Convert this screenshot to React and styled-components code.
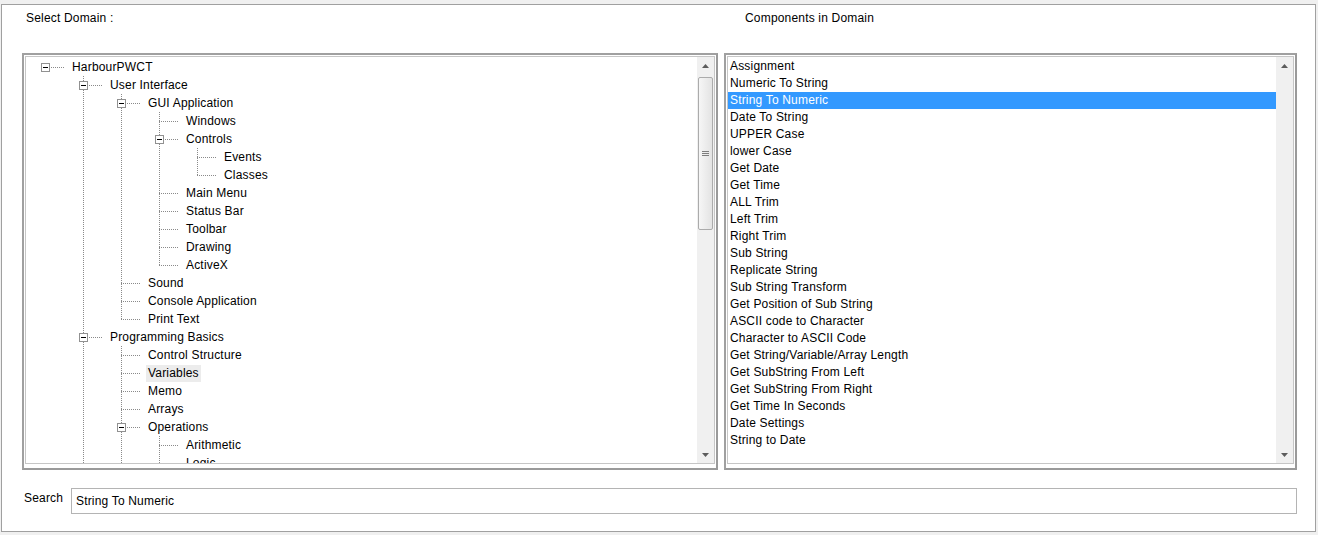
import React from "react";
import styled, { createGlobalStyle } from "styled-components";

const GlobalStyle = createGlobalStyle`
  html, body {
    margin: 0;
    padding: 0;
    background: #f0f0f0;
  }
  body {
    font-family: "Liberation Sans", Arial, sans-serif;
    font-size: 12px;
    letter-spacing: 0.18px;
    color: #000;
  }
`;

const Window = styled.div`
  box-sizing: border-box;
  margin: 4px 0 0 1px;
  width: 1315px;
  height: 528px;
  border: 1px solid #a0a0a0;
  background: #ffffff;
  padding-left: 20px;
`;

const Columns = styled.div`
  display: grid;
  grid-template-columns: 696px 573px;
  column-gap: 6px;
`;

const Header = styled(Columns)`
  box-sizing: border-box;
  height: 48px;
  padding-top: 6px;
`;

const Caption = styled.div`
  line-height: 14px;
  padding-left: ${(props) => props.$indent}px;
`;

const Frame = styled.div`
  box-sizing: border-box;
  height: 417px;
  display: flex;
  border: 2px solid;
  border-color: #a0a0a0 #9a9a9a #9a9a9a #a0a0a0;
  padding: 1px 1px 4px 1px;
`;

const ListBox = styled.div`
  flex: 1;
  min-width: 0;
  display: flex;
  border: 1px solid #c6c6c6;
  background: #ffffff;
  overflow: hidden;
`;

const TreeArea = styled.div`
  flex: 1;
  min-width: 0;
  overflow: hidden;
  padding-top: 1px;
`;

const TreeRow = styled.div`
  display: flex;
  height: 18px;
`;

const Cell = styled.div`
  position: relative;
  flex: none;
  width: 38px;

  &::before {
    content: "";
    display: ${(props) => (props.$up || props.$down ? "block" : "none")};
    position: absolute;
    left: 19px;
    width: 1px;
    top: ${(props) => (props.$up ? 0 : 9)}px;
    bottom: ${(props) => (props.$down ? 0 : 8)}px;
    background-image: linear-gradient(to bottom, #8a8a8a 50%, transparent 50%);
    background-size: 1px 2px;
  }

  &::after {
    content: "";
    display: ${(props) => (props.$h ? "block" : "none")};
    position: absolute;
    left: 19px;
    right: 0;
    top: 9px;
    height: 1px;
    background-image: linear-gradient(to right, #8a8a8a 50%, transparent 50%);
    background-size: 2px 1px;
  }
`;

const ExpandBox = styled.div`
  position: absolute;
  z-index: 1;
  left: 15px;
  top: 5px;
  width: 9px;
  height: 9px;
  box-sizing: border-box;
  border: 1px solid #919191;
  background: #ffffff;

  &::after {
    content: "";
    position: absolute;
    left: 1px;
    top: 3px;
    width: 5px;
    height: 1px;
    background: #000000;
  }
`;

const NodeLabel = styled.div`
  margin: 1px 0 0 6px;
  padding: 0 2px;
  height: 17px;
  line-height: 17px;
  white-space: nowrap;
  background: ${(props) => (props.$selected ? "#ececec" : "transparent")};
`;

const ScrollBar = styled.div`
  flex: none;
  width: 17px;
  display: flex;
  flex-direction: column;
  background: #f0f0f0;
`;

const ArrowButton = styled.div`
  flex: none;
  height: 17px;
  display: flex;
  align-items: center;
  justify-content: center;
`;

const Track = styled.div`
  flex: 1;
  padding: 3px 1px 0 1px;
`;

const Thumb = styled.div`
  box-sizing: border-box;
  height: 153px;
  border: 1px solid #ababab;
  border-radius: 2px;
  background: linear-gradient(to right, #f6f6f6, #e3e3e3);
  display: flex;
  align-items: center;
  justify-content: center;
`;

const ListArea = styled.div`
  flex: 1;
  min-width: 0;
  overflow: hidden;
  padding-top: 1px;
`;

const ListItem = styled.div`
  height: 17px;
  line-height: 17px;
  padding-left: 2px;
  white-space: nowrap;
  background: ${(props) => (props.$selected ? "#3399ff" : "transparent")};
  color: ${(props) => (props.$selected ? "#ffffff" : "#000000")};
`;

const SearchRow = styled.div`
  display: flex;
  margin-top: 18px;
`;

const SearchLabel = styled.div`
  box-sizing: border-box;
  width: 49px;
  padding-left: 2px;
  margin-top: 3px;
  line-height: 14px;
`;

const SearchInput = styled.input`
  box-sizing: border-box;
  width: 1226px;
  height: 26px;
  border: 1px solid #b4b4b4;
  padding: 0 4px;
  font-family: "Liberation Sans", Arial, sans-serif;
  font-size: 12px;
  letter-spacing: 0.18px;
  color: #000;
  background: #fff;
  outline: none;
`;

// "continues" marks a node whose following siblings lie below the visible area
const domains = [
    {
        label: "HarbourPWCT",
        children: [
            {
                label: "User Interface",
                children: [
                    {
                        label: "GUI Application",
                        children: [
                            { label: "Windows" },
                            {
                                label: "Controls",
                                children: [{ label: "Events" }, { label: "Classes" }],
                            },
                            { label: "Main Menu" },
                            { label: "Status Bar" },
                            { label: "Toolbar" },
                            { label: "Drawing" },
                            { label: "ActiveX" },
                        ],
                    },
                    { label: "Sound" },
                    { label: "Console Application" },
                    { label: "Print Text" },
                ],
            },
            {
                label: "Programming Basics",
                continues: true,
                children: [
                    { label: "Control Structure" },
                    { label: "Variables", selected: true },
                    { label: "Memo" },
                    { label: "Arrays" },
                    {
                        label: "Operations",
                        continues: true,
                        children: [
                            { label: "Arithmetic" },
                            { label: "Logic", continues: true },
                        ],
                    },
                ],
            },
        ],
    },
];

const components = [
    "Assignment",
    "Numeric To String",
    "String To Numeric",
    "Date To String",
    "UPPER Case",
    "lower Case",
    "Get Date",
    "Get Time",
    "ALL Trim",
    "Left Trim",
    "Right Trim",
    "Sub String",
    "Replicate String",
    "Sub String Transform",
    "Get Position of Sub String",
    "ASCII code to Character",
    "Character to ASCII Code",
    "Get String/Variable/Array Length",
    "Get SubString From Left",
    "Get SubString From Right",
    "Get Time In Seconds",
    "Date Settings",
    "String to Date",
];

function flatten(nodes, depth, guides, rows) {
    nodes.forEach((node, i) => {
        const isLast = i === nodes.length - 1 && !node.continues;
        rows.push({
            label: node.label,
            selected: node.selected,
            depth,
            guides,
            up: depth > 0 || i > 0,
            down: !isLast,
            hasChildren: !!node.children,
        });
        if (node.children) {
            flatten(node.children, depth + 1, [...guides, !isLast], rows);
        }
    });
    return rows;
}

function Arrow({ down }) {
    return (
        <svg width="7" height="4" viewBox="0 0 7 4">
            <path
                d={down ? "M0 0 L7 0 L3.5 4 Z" : "M3.5 0 L7 4 L0 4 Z"}
                fill="#5c5c5c"
            />
        </svg>
    );
}

function Scroller({ thumb }) {
    return (
        <ScrollBar>
            <ArrowButton>
                <Arrow />
            </ArrowButton>
            <Track>
                {thumb && (
                    <Thumb>
                        <svg width="7" height="6" viewBox="0 0 7 6">
                            <path d="M0 0.5 H7 M0 2.5 H7 M0 4.5 H7" stroke="#7d7d7d" strokeWidth="1" />
                        </svg>
                    </Thumb>
                )}
            </Track>
            <ArrowButton>
                <Arrow down />
            </ArrowButton>
        </ScrollBar>
    );
}

function DomainTree() {
    const rows = flatten(domains, 0, [], []);
    return (
        <TreeArea>
            {rows.map((row, idx) => (
                <TreeRow key={idx}>
                    {row.guides.map((line, k) => (
                        <Cell key={k} $up={line} $down={line} />
                    ))}
                    <Cell $up={row.up} $down={row.down} $h>
                        {row.hasChildren && <ExpandBox />}
                    </Cell>
                    <NodeLabel $selected={row.selected}>{row.label}</NodeLabel>
                </TreeRow>
            ))}
        </TreeArea>
    );
}

export default function App() {
    return (
        <>
            <GlobalStyle />
            <Window>
                <Header>
                    <Caption $indent={4}>Select Domain :</Caption>
                    <Caption $indent={21}>Components in Domain</Caption>
                </Header>
                <Columns>
                    <Frame>
                        <ListBox>
                            <DomainTree />
                            <Scroller thumb />
                        </ListBox>
                    </Frame>
                    <Frame>
                        <ListBox>
                            <ListArea>
                                {components.map((name) => (
                                    <ListItem
                                        key={name}
                                        $selected={name === "String To Numeric"}
                                    >
                                        {name}
                                    </ListItem>
                                ))}
                            </ListArea>
                            <Scroller />
                        </ListBox>
                    </Frame>
                </Columns>
                <SearchRow>
                    <SearchLabel>Search</SearchLabel>
                    <SearchInput type="text" value="String To Numeric" readOnly />
                </SearchRow>
            </Window>
        </>
    );
}
